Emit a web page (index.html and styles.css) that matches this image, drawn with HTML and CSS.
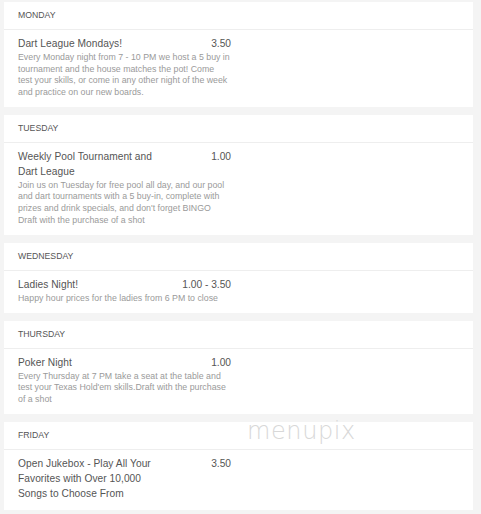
FILE: index.html
```html
<!DOCTYPE html>
<html>
<head>
<meta charset="utf-8">
<link rel="stylesheet" href="styles.css">
</head>
<body>
<div class="menu">
  <section class="card">
    <div class="head">MONDAY</div>
    <div class="item">
      <div class="row"><div class="title">Dart League Mondays!</div><div class="price">3.50</div></div>
      <div class="desc">Every Monday night from 7 - 10 PM we host a 5 buy in tournament and the house matches the pot! Come test your skills, or come in any other night of the week and practice on our new boards.</div>
    </div>
  </section>
  <section class="card">
    <div class="head">TUESDAY</div>
    <div class="item">
      <div class="row"><div class="title">Weekly Pool Tournament and Dart League</div><div class="price">1.00</div></div>
      <div class="desc">Join us on Tuesday for free pool all day, and our pool and dart tournaments with a 5 buy-in, complete with prizes and drink specials, and don't forget BINGO Draft with the purchase of a shot</div>
    </div>
  </section>
  <section class="card">
    <div class="head">WEDNESDAY</div>
    <div class="item">
      <div class="row"><div class="title">Ladies Night!</div><div class="price">1.00 - 3.50</div></div>
      <div class="desc">Happy hour prices for the ladies from 6 PM to close</div>
    </div>
  </section>
  <section class="card">
    <div class="head">THURSDAY</div>
    <div class="item">
      <div class="row"><div class="title">Poker Night</div><div class="price">1.00</div></div>
      <div class="desc">Every Thursday at 7 PM take a seat at the table and test your Texas Hold'em skills.Draft with the purchase of a shot</div>
    </div>
  </section>
  <section class="card">
    <div class="head">FRIDAY</div>
    <div class="item">
      <div class="row"><div class="title">Open Jukebox - Play All Your Favorites with Over 10,000 Songs to Choose From</div><div class="price">3.50</div></div>
    </div>
  </section>
  <div class="watermark">menupix</div>
</div>
</body>
</html>
```
FILE: styles.css
```css
html, body {
  margin: 0;
  padding: 0;
  background: #f4f4f4;
}
body {
  font-family: "Liberation Sans", Arial, sans-serif;
}
.menu {
  position: relative;
  padding: 2px 8px 0 4px;
  display: flex;
  flex-direction: column;
  gap: 8px;
}
.card {
  background: #fff;
}
.head {
  height: 27px;
  line-height: 27px;
  padding-left: 14px;
  font-size: 8.7px;
  color: #555;
  border-bottom: 1px solid #eeeeee;
}
.item {
  width: 213px;
  padding: 6px 0 8.5px 14px;
}
.row {
  display: flex;
  justify-content: space-between;
}
.title {
  width: 150px;
  font-size: 10.2px;
  line-height: 15px;
  color: #555;
  letter-spacing: 0.05px;
}
.price {
  flex: 1;
  text-align: right;
  font-size: 10.2px;
  line-height: 15px;
  color: #555;
}
.desc {
  width: 212.4px;
  margin-top: 1px;
  font-size: 8.8px;
  line-height: 11.6px;
  color: #9a9a9a;
}
.watermark {
  position: absolute;
  left: 247px;
  top: 417px;
  font-family: "DejaVu Sans", sans-serif;
  font-weight: 200;
  font-size: 24px;
  letter-spacing: 0.6px;
  color: #d8d8d8;
}
```
